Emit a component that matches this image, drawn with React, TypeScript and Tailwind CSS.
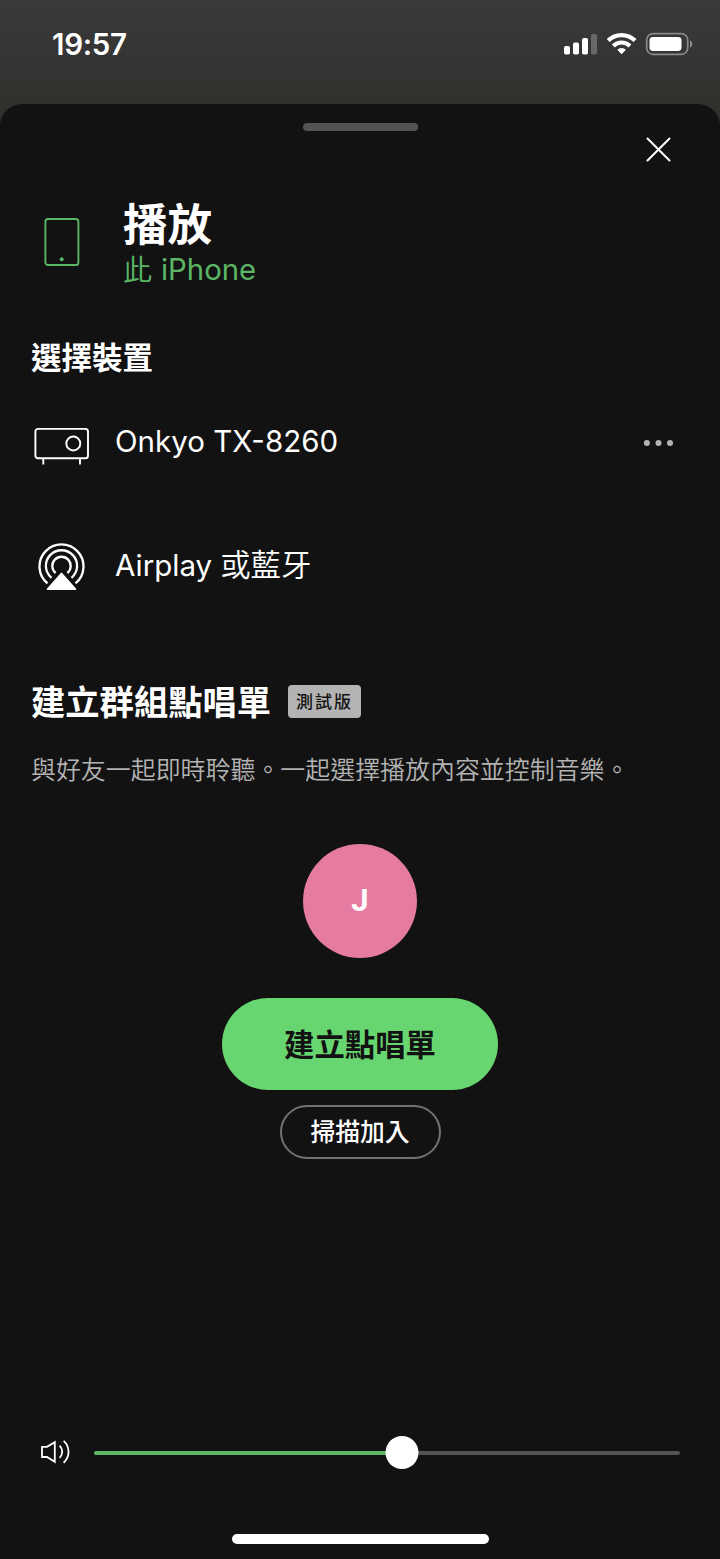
import React from 'react';

const StatusBar: React.FC = () => (
  <header className="flex h-[104px] items-start justify-between bg-gradient-to-b from-[#3b393b] via-[#363535] to-[#30312d] pl-[52px] pr-[27px] pt-[28px]">
    <span className="font-['Inter'] text-[29.5px] font-semibold leading-[33px] tracking-[-0.3px]">19:57</span>
    <svg width="130" height="24" viewBox="0 0 130 24" fill="#fff" className="mt-[4px]">
      <rect x="1" y="14" width="6" height="8.5" rx="1.8" />
      <rect x="10" y="10.5" width="6" height="12" rx="1.8" />
      <rect x="19" y="6" width="6" height="16.5" rx="1.8" />
      <rect x="28" y="2" width="6" height="20.5" rx="1.8" opacity="0.25" />
      <g fill="none" stroke="#fff" strokeWidth="4.2">
        <path d="M45.2 8.6a19 19 0 0 1 26.8 0" />
        <path d="M50.3 13.9a11.8 11.8 0 0 1 16.6 0" />
      </g>
      <path d="M58.6 22.2l-4.3-4.4a6.3 6.3 0 0 1 8.6 0z" />
      <rect x="83.7" y="1.7" width="41" height="20.6" rx="6.2" fill="none" stroke="#8a8a89" strokeWidth="1.7" />
      <rect x="86.5" y="5" width="32" height="14" rx="3.4" />
      <path d="M127 8.3a4 4 0 0 1 0 7.4z" fill="#8a8a89" />
    </svg>
  </header>
);

const PhoneIcon: React.FC = () => (
  <svg width="36" height="50" viewBox="0 0 36 50" fill="none">
    <rect x="1.4" y="2" width="33" height="46" rx="2.6" stroke="#5bb665" strokeWidth="1.9" />
    <circle cx="17.7" cy="42.3" r="2" fill="#5bb665" />
  </svg>
);

const ReceiverIcon: React.FC = () => (
  <svg className="mt-1" width="56" height="40" viewBox="0 0 56 40" fill="none" stroke="#fff" strokeWidth="1.9">
    <rect x="1.4" y="1.9" width="52.6" height="29.4" rx="2.6" />
    <circle cx="39.3" cy="16.5" r="7" />
    <path d="M9.3 31v6.6M46 31v6.6" />
  </svg>
);

const AirplayIcon: React.FC = () => (
  <svg className="mb-[2px]" width="48" height="48" viewBox="0 0 48 48" fill="none" stroke="#fff" strokeWidth="2.3">
    <path d="M9.5 40.4a22 22 0 1 1 28 0" />
    <path d="M13.5 34.8a15.6 15.6 0 1 1 20 0" />
    <path d="M17.6 30a9.2 9.2 0 1 1 11.8 0" />
    <path d="M23.5 30.5l13.8 15.7H9.7z" fill="#fff" strokeWidth="1.8" strokeLinejoin="round" />
  </svg>
);

const VolumeIcon: React.FC = () => (
  <svg width="32" height="26" viewBox="0 0 32 26" fill="none" stroke="#fff" strokeWidth="1.8">
    <path d="M2 7.8h5l7.8-4.6v19.6L7 18H2z" />
    <path d="M19.6 6.7a8.5 8.5 0 0 1 0 12.2M23.6 1.9a14.5 14.5 0 0 1 0 21.8" />
  </svg>
);

const devices = [
  { id: 'onkyo', name: 'Onkyo TX-8260', cjk: '', icon: ReceiverIcon, menu: true },
  { id: 'airplay', name: 'Airplay', cjk: '或藍牙', icon: AirplayIcon, menu: false },
];

const volume = 52.6;

export default function App() {
  return (
    <div className="h-[1559px] w-[720px] overflow-hidden bg-[#30312d] font-['Inter','Noto_Sans_CJK_TC',sans-serif] text-white">
      <StatusBar />

      <main className="relative flex h-[1455px] flex-col rounded-t-[22px] bg-[#121212]">
        <div className="mx-auto mt-[19px] h-2 w-[115px] shrink-0 rounded-full bg-[#535353]" />
        <button className="absolute right-[48px] top-[32px]" aria-label="關閉">
          <svg width="27" height="27" viewBox="0 0 27 27" stroke="#fff" strokeWidth="2" strokeLinecap="round">
            <path d="M2.5 2.5l22 22M24.5 2.5l-22 22" />
          </svg>
        </button>

        {/* Current device */}
        <section className="mt-[65px] flex h-[94px] shrink-0 pl-[44px]">
          <div className="mt-[21px] w-[79px]">
            <PhoneIcon />
          </div>
          <div>
            <h1 className="font-['Noto_Sans_CJK_TC'] text-[44.5px] font-bold leading-[52px]">播放</h1>
            <p className="mt-px flex text-[#5bb665]">
              <span className="font-['Noto_Sans_CJK_TC'] text-[29px] font-[350] leading-[38px]">此</span>
              <span className="ml-[9px] text-[29.3px] leading-[41px]">iPhone</span>
            </p>
          </div>
        </section>

        <h2 className="mt-[44px] h-[44px] shrink-0 pl-[31px] font-['Noto_Sans_CJK_TC'] text-[30.5px] font-bold leading-[44px]">
          選擇裝置
        </h2>

        <ul className="mt-[3px] shrink-0">
          {devices.map(({ id, name, cjk, icon: Icon, menu }) => (
            <li key={id} className="flex h-[123px] items-center pl-[34px] pr-[46px]">
              <div className="mt-1 flex w-[56px] justify-center">
                <Icon />
              </div>
              <p className="-mt-[3px] ml-[25px] flex-1 text-[29.5px] leading-[40px]">
                {name}
                {cjk && <span className="ml-[8px] font-['Noto_Sans_CJK_TC'] text-[30.4px] font-[350]">{cjk}</span>}
              </p>
              {menu && (
                <svg width="32" height="8" viewBox="0 0 32 8" fill="#b3b3b3">
                  <circle cx="4.9" cy="4" r="3" />
                  <circle cx="16.5" cy="4" r="3" />
                  <circle cx="28" cy="4" r="3" />
                </svg>
              )}
            </li>
          ))}
        </ul>

        {/* Group session */}
        <section className="mt-[48px] flex shrink-0 flex-col font-['Noto_Sans_CJK_TC']">
          <div className="flex h-[50px] items-center pl-[31px]">
            <h2 className="text-[34.3px] font-bold leading-[50px]">建立群組點唱單</h2>
            <span className="ml-[17px] mt-[2px] h-[33px] w-[73px] rounded-[4px] bg-[#b3b3b3] pl-[8px] text-[17px] font-medium leading-[31px] tracking-[2px] text-[#121212]">
              測試版
            </span>
          </div>
          <p className="mt-[23px] whitespace-nowrap pl-[31px] text-[24.95px] font-[350] leading-[40px] text-[#b3b3b3]">
            與好友一起即時聆聽。一起選擇播放內容並控制音樂。
          </p>
          <div className="mt-[56px] flex flex-col items-center">
            <div className="flex h-[114px] w-[114px] items-center justify-center rounded-full bg-[#e57ba1] font-['Roboto'] text-[31px] font-bold">
              J
            </div>
            <button className="mt-[40px] h-[92px] w-[276px] rounded-full bg-[#68d670] pb-[2px] text-[30.4px] font-bold leading-[90px] text-[#121212]">
              建立點唱單
            </button>
            <button className="mt-[15px] h-[54px] w-[161px] rounded-full border-2 border-[#727272] pb-[3px] text-[24.8px] font-medium leading-[47px]">
              掃描加入
            </button>
          </div>
        </section>

        {/* Volume */}
        <div className="mb-[66px] mt-auto flex h-[33px] shrink-0 items-center pl-[40px] pr-[40px]">
          <VolumeIcon />
          <div className="relative ml-[22px] mt-[2px] h-1 flex-1 rounded-full bg-[#535353]">
            <div className="h-1 rounded-full bg-[#5bb665]" style={{ width: `${volume}%` }} />
            <div
              className="absolute -top-[15px] h-[33px] w-[33px] -translate-x-1/2 rounded-full bg-white"
              style={{ left: `${volume}%` }}
            />
          </div>
        </div>
        <div className="mb-[15px] ml-[232px] h-[10px] w-[257px] shrink-0 rounded-full bg-white" />
      </main>
    </div>
  );
}
